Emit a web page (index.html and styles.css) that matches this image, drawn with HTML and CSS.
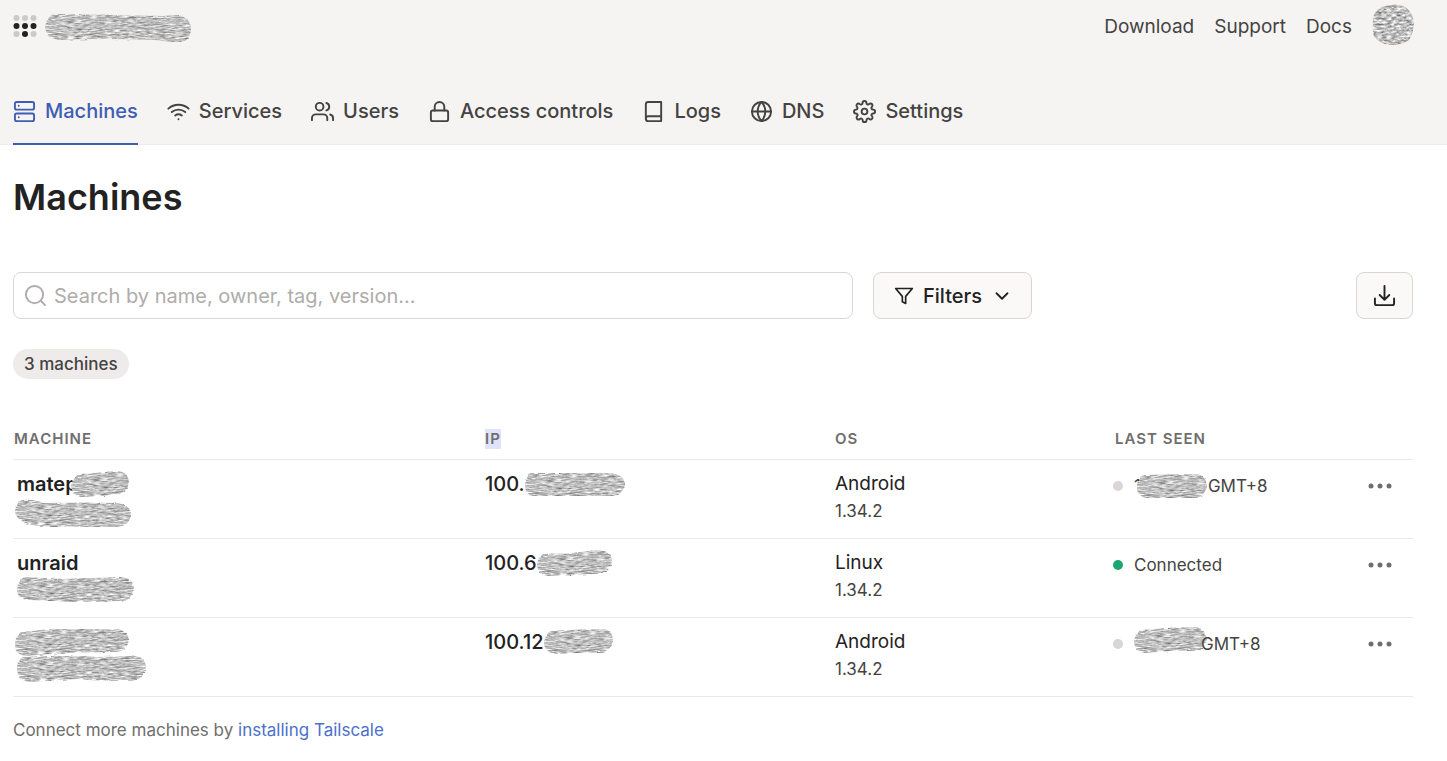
FILE: index.html
```
<!DOCTYPE html>
<html lang="en">
<head>
<meta charset="utf-8">
<meta name="viewport" content="width=device-width, initial-scale=1">
<title>Machines</title>
<link rel="stylesheet" href="styles.css">
</head>
<body>
<svg class="defs" width="0" height="0" aria-hidden="true">
  <filter id="smear" x="0" y="0" width="100%" height="100%" color-interpolation-filters="sRGB">
    <feTurbulence type="fractalNoise" baseFrequency="0.13 0.75" numOctaves="3" seed="4" result="noise"/>
    <feColorMatrix in="noise" type="matrix" values="0.6 0.5 0 0 0.2  0.6 0.5 0 0 0.2  0.6 0.5 0 0 0.2  0 0 0 0 1" result="grey"/>
    <feDisplacementMap in="SourceGraphic" in2="noise" scale="3" xChannelSelector="R" yChannelSelector="G" result="edge"/>
    <feComposite in="grey" in2="edge" operator="in"/>
  </filter>
  <filter id="swirl" x="0" y="0" width="100%" height="100%" color-interpolation-filters="sRGB">
    <feTurbulence type="fractalNoise" baseFrequency="0.2 0.5" numOctaves="3" seed="9" result="noise"/>
    <feColorMatrix in="noise" type="matrix" values="0.7 0.6 0 0 0.1  0.7 0.6 0 0 0.1  0.7 0.6 0 0 0.1  0 0 0 0 1" result="grey"/>
    <feComposite in="grey" in2="SourceGraphic" operator="in"/>
  </filter>
</svg>

<header class="header">
  <div class="topbar">
    <div class="brand">
      <svg class="logo" viewBox="0 0 24 24" aria-hidden="true">
        <g fill="#cccac9"><circle cx="3.5" cy="4" r="3"/><circle cx="12" cy="4" r="3"/><circle cx="20.5" cy="4" r="3"/><circle cx="3.5" cy="20" r="3"/><circle cx="20.5" cy="20" r="3"/></g>
        <g fill="#232222"><circle cx="3.5" cy="12" r="3"/><circle cx="12" cy="12" r="3"/><circle cx="20.5" cy="12" r="3"/><circle cx="12" cy="20" r="3"/></g>
      </svg>
      <svg class="smear low" width="148" height="32" viewBox="0 0 148 32" aria-hidden="true"><path filter="url(#smear)" d="M11 2Q60 3 120 4Q132 2 138 4Q147 8 147 17Q146 30 135 30Q122 30 110 28Q60 26 14 28Q2 26 1 15Q2 4 11 2Z"/></svg>
    </div>
    <div class="links">
      <a href="#">Download</a>
      <a href="#">Support</a>
      <a href="#">Docs</a>
      <button class="avatar" type="button" aria-label="Account">
        <svg width="42" height="42" viewBox="0 0 42 42" aria-hidden="true"><path filter="url(#swirl)" d="M10 3Q21-1 32 2Q41 8 42 20Q41 31 36 37Q29 41 17 41Q8 40 2 32Q0 27 1 19Q0 7 10 3Z"/></svg>
      </button>
    </div>
  </div>
  <nav class="nav">
    <a class="tab active" href="#"><svg class="icon" viewBox="0 0 24 24"><rect x="2" y="2" width="20" height="8" rx="2"/><rect x="2" y="14" width="20" height="8" rx="2"/><path d="M6 6h.01M6 18h.01"/></svg>Machines</a>
    <a class="tab" href="#"><svg class="icon" viewBox="0 0 24 24"><path d="M5 12.55a11 11 0 0 1 14.08 0M1.42 9a16 16 0 0 1 21.16 0M8.53 16.11a6 6 0 0 1 6.95 0M12 20h.01"/></svg>Services</a>
    <a class="tab" href="#"><svg class="icon" viewBox="0 0 24 24"><path d="M17 21v-2a4 4 0 0 0-4-4H5a4 4 0 0 0-4 4v2M23 21v-2a4 4 0 0 0-3-3.87M16 3.13a4 4 0 0 1 0 7.75"/><circle cx="9" cy="7" r="4"/></svg>Users</a>
    <a class="tab" href="#"><svg class="icon" viewBox="0 0 24 24"><rect x="3" y="11" width="18" height="11" rx="2"/><path d="M7 11V7a5 5 0 0 1 10 0v4"/></svg>Access controls</a>
    <a class="tab" href="#"><svg class="icon" viewBox="0 0 24 24"><path d="M4 19.500A2.500 2.500 0 0 1 6.500 17H20M6.500 2H20v20H6.500A2.500 2.500 0 0 1 4 19.500v-15A2.500 2.500 0 0 1 6.500 2z"/></svg>Logs</a>
    <a class="tab" href="#"><svg class="icon" viewBox="0 0 24 24"><circle cx="12" cy="12" r="10"/><path d="M2 12h20M12 2a15.300 15.300 0 0 1 4 10 15.300 15.300 0 0 1-4 10 15.300 15.300 0 0 1-4-10 15.300 15.300 0 0 1 4-10z"/></svg>DNS</a>
    <a class="tab" href="#"><svg class="icon" viewBox="0 0 24 24"><circle cx="12" cy="12" r="3"/><path d="M19.400 15a1.650 1.650 0 0 0 .33 1.820l.06.06a2 2 0 0 1 0 2.830 2 2 0 0 1-2.830 0l-.06-.06a1.650 1.650 0 0 0-1.820-.33 1.650 1.650 0 0 0-1 1.510V21a2 2 0 0 1-2 2 2 2 0 0 1-2-2v-.09A1.650 1.650 0 0 0 9 19.400a1.650 1.650 0 0 0-1.820.33l-.06.06a2 2 0 0 1-2.830 0 2 2 0 0 1 0-2.830l.06-.06a1.650 1.650 0 0 0 .33-1.820 1.650 1.650 0 0 0-1.510-1H3a2 2 0 0 1-2-2 2 2 0 0 1 2-2h.09A1.650 1.650 0 0 0 4.600 9a1.650 1.650 0 0 0-.33-1.820l-.06-.06a2 2 0 0 1 0-2.830 2 2 0 0 1 2.830 0l.06.06a1.650 1.650 0 0 0 1.820.33H9a1.650 1.650 0 0 0 1-1.510V3a2 2 0 0 1 2-2 2 2 0 0 1 2 2v.09a1.650 1.650 0 0 0 1 1.510 1.650 1.650 0 0 0 1.820-.33l.06-.06a2 2 0 0 1 2.830 0 2 2 0 0 1 0 2.830l-.06.06a1.650 1.650 0 0 0-.33 1.820V9a1.650 1.650 0 0 0 1.510 1H21a2 2 0 0 1 2 2 2 2 0 0 1-2 2h-.09a1.650 1.650 0 0 0-1.510 1z"/></svg>Settings</a>
  </nav>
</header>

<main class="main">
  <h1 class="title">Machines</h1>

  <div class="toolbar">
    <label class="search">
      <svg class="search-icon" viewBox="0 0 24 24" aria-hidden="true"><circle cx="11" cy="11" r="9"/><path d="M22 22l-4.500-4.500"/></svg>
      <input type="text" placeholder="Search by name, owner, tag, version..." aria-label="Search machines">
    </label>
    <button class="button filters" type="button">
      <svg class="funnel" viewBox="0 0 24 24" aria-hidden="true"><path d="M22 3H2l8 9.460V19l4 2v-8.540L22 3z"/></svg>
      <span>Filters</span>
      <svg class="chevron" viewBox="0 0 24 24" aria-hidden="true"><path d="M6 9l6 6 6-6"/></svg>
    </button>
    <button class="button download" type="button" aria-label="Download list">
      <svg class="tray" viewBox="0 0 24 24" aria-hidden="true"><path d="M12 2v14M7 11.500l5 5 5-5M2 15v5a2 2 0 0 0 2 2h16a2 2 0 0 0 2-2v-5"/></svg>
    </button>
  </div>

  <div class="count">3 machines</div>

  <table class="table">
    <colgroup><col><col class="col-ip"><col class="col-os"><col class="col-seen"><col class="col-menu"></colgroup>
    <thead>
      <tr><th>Machine</th><th><mark>IP</mark></th><th>OS</th><th>Last seen</th><th></th></tr>
    </thead>
    <tbody>
      <tr>
        <td>
          <div class="line name">matep<svg class="smear over" width="60" height="28" viewBox="0 0 60 28" aria-hidden="true"><path filter="url(#smear)" d="M10 4Q28 3 46 1Q58 1 59 12Q58 22 48 24Q28 27 10 27Q2 24 1 16Q3 6 10 4Z"/></svg></div>
          <div class="line"><svg class="smear low" width="118" height="30" viewBox="0 0 118 30" aria-hidden="true"><path filter="url(#smear)" d="M8 2Q18 1 30 5Q65 4 104 5Q117 7 117 17Q115 28 104 29Q60 29 26 28Q2 26 1 13Q2 4 8 2Z"/></svg></div>
        </td>
        <td><div class="line ip">100.<svg class="smear" width="102" height="26" viewBox="0 0 102 26" aria-hidden="true"><path filter="url(#smear)" d="M6 2H88Q101 5 101 14Q98 25 88 25H8Q1 23 1 14Q2 5 6 2Z"/></svg></div></td>
        <td><div class="line os">Android</div><div class="line version">1.34.2</div></td>
        <td><div class="line seen"><span class="dot"></span>1<svg class="smear over" width="72" height="26" viewBox="0 0 72 26" aria-hidden="true"><path filter="url(#smear)" d="M8 2Q35 1 62 1Q71 4 71 14Q68 24 60 25H10Q1 23 1 14Q2 4 8 2Z"/></svg>GMT+8</div></td>
        <td><button class="menu" type="button" aria-label="Machine menu"><svg viewBox="0 0 24 6"><circle cx="3" cy="3" r="2.500"/><circle cx="12" cy="3" r="2.500"/><circle cx="21" cy="3" r="2.500"/></svg></button></td>
      </tr>
      <tr>
        <td>
          <div class="line name">unraid</div>
          <div class="line"><svg class="smear inset" width="119" height="27" viewBox="0 0 119 27" aria-hidden="true"><path filter="url(#smear)" d="M8 1Q30 2 46 3L104 1Q117 2 118 12Q115 25 106 25Q70 26 52 26Q30 24 12 24Q1 23 1 14Q2 4 8 1Z"/></svg></div>
        </td>
        <td><div class="line ip">100.6<svg class="smear" width="77" height="28" viewBox="0 0 77 28" aria-hidden="true"><path filter="url(#smear)" d="M8 5Q35 5 60 1Q76 2 76 12Q75 23 64 24Q38 27 12 27Q1 25 1 16Q1 8 8 5Z"/></svg></div></td>
        <td><div class="line os">Linux</div><div class="line version">1.34.2</div></td>
        <td><div class="line seen"><span class="dot online"></span>Connected</div></td>
        <td><button class="menu" type="button" aria-label="Machine menu"><svg viewBox="0 0 24 6"><circle cx="3" cy="3" r="2.500"/><circle cx="12" cy="3" r="2.500"/><circle cx="21" cy="3" r="2.500"/></svg></button></td>
      </tr>
      <tr>
        <td>
          <div class="line"><svg class="smear" width="116" height="30" viewBox="0 0 116 30" aria-hidden="true"><path filter="url(#smear)" d="M8 5Q30 2 50 2L104 2Q114 4 115 13Q113 24 102 25Q60 25 38 27L10 29Q1 26 1 17Q2 7 8 5Z"/></svg></div>
          <div class="line"><svg class="smear inset" width="131" height="29" viewBox="0 0 131 29" aria-hidden="true"><path filter="url(#smear)" d="M7 3Q60 1 80 3L114 2Q129 1 130 13Q128 25 116 27Q80 27 60 25L12 28Q1 25 1 15Q1 6 7 3Z"/></svg></div>
        </td>
        <td><div class="line ip">100.12<svg class="smear" width="71" height="27" viewBox="0 0 71 27" aria-hidden="true"><path filter="url(#smear)" d="M8 3Q35 1 62 1Q70 4 70 13Q67 23 60 24L12 26Q1 24 1 15Q2 5 8 3Z"/></svg></div></td>
        <td><div class="line os">Android</div><div class="line version">1.34.2</div></td>
        <td><div class="line seen"><span class="dot"></span><svg class="smear high" width="75" height="28" viewBox="0 0 75 28" aria-hidden="true"><path filter="url(#smear)" d="M8 4Q40 1 64 1Q73 6 74 14L68 24Q40 24 12 27Q1 25 1 16Q2 7 8 4Z"/></svg><span class="under">GMT+8</span></div></td>
        <td><button class="menu" type="button" aria-label="Machine menu"><svg viewBox="0 0 24 6"><circle cx="3" cy="3" r="2.500"/><circle cx="12" cy="3" r="2.500"/><circle cx="21" cy="3" r="2.500"/></svg></button></td>
      </tr>
    </tbody>
  </table>

  <p class="footnote">Connect more machines by <a href="#">installing Tailscale</a></p>
</main>
</body>
</html>
```
FILE: styles.css
```
* {
  box-sizing: border-box;
}

body {
  margin: 0;
  background: #fff;
  color: #232222;
  font-family: Inter, "Liberation Sans", sans-serif;
  font-size: 20px;
  line-height: 30px;
}

a {
  color: inherit;
  text-decoration: none;
}

button {
  font: inherit;
  color: inherit;
  cursor: pointer;
}

svg {
  display: block;
  flex: none;
}

.defs {
  position: absolute;
}

.header {
  padding: 3px 33px 0 13px;
  background: #f6f4f3;
  border-bottom: 1px solid #eeebea;
  color: #444342;
}

.topbar {
  display: flex;
  justify-content: space-between;
}

.brand {
  display: flex;
  align-items: center;
  gap: 7px;
  height: 46px;
}

.logo {
  width: 24px;
  height: 24px;
}

.links {
  display: flex;
  align-items: center;
  gap: 20px;
  height: 44px;
  font-size: 19px;
}

.links a {
  padding-top: 3px;
}

.avatar {
  padding: 0;
  border: 0;
  background: none;
}

.nav {
  display: flex;
  gap: 29px;
  margin-top: 30px;
  margin-bottom: -1px;
  font-weight: 500;
}

.tab {
  display: flex;
  align-items: center;
  gap: 9px;
  height: 66px;
  border-bottom: 2px solid transparent;
  white-space: nowrap;
}

.tab.active {
  color: #3f5db3;
  border-color: #3f5db3;
}

.icon {
  width: 23px;
  height: 23px;
}

.icon,
.search-icon,
.funnel,
.chevron,
.tray {
  fill: none;
  stroke: currentColor;
  stroke-width: 2;
  stroke-linecap: round;
  stroke-linejoin: round;
}

.main {
  padding: 27px 34px 18px 13px;
}

.title {
  margin: 0;
  font-size: 36px;
  font-weight: 600;
  line-height: 50px;
}

.toolbar {
  display: flex;
  gap: 20px;
  margin-top: 50px;
}

.search {
  display: flex;
  align-items: center;
  gap: 7px;
  width: 60%;
  height: 47px;
  padding: 0 10px;
  border: 1px solid #d9d6d5;
  border-radius: 8px;
}

.search-icon {
  width: 23px;
  height: 23px;
  color: #afacab;
}

.search input {
  flex: 1;
  min-width: 0;
  padding: 0;
  border: 0;
  outline: 0;
  background: none;
  color: inherit;
  font: inherit;
}

.search input::placeholder {
  color: #afacab;
  opacity: 1;
}

.button {
  display: flex;
  align-items: center;
  justify-content: center;
  height: 47px;
  padding: 0 18px 0 20px;
  border: 1px solid #d9d6d5;
  border-radius: 8px;
  background: #faf9f8;
  font-weight: 500;
}

.filters {
  gap: 9px;
}

.funnel {
  width: 20px;
  height: 20px;
}

.chevron {
  width: 22px;
  height: 22px;
}

.download {
  width: 57px;
  padding: 0;
  margin-left: auto;
}

.tray {
  width: 23px;
  height: 23px;
}

.count {
  width: max-content;
  margin-top: 30px;
  padding: 0 11px;
  border-radius: 15px;
  background: #eeebea;
  color: #444342;
  font-size: 17px;
  font-weight: 500;
}

.table {
  width: 100%;
  margin-top: 45px;
  border-collapse: separate;
  border-spacing: 0;
  table-layout: fixed;
}

.col-ip {
  width: 25%;
}

.col-os {
  width: 20%;
}

.col-seen {
  width: 16%;
}

.col-menu {
  width: 74px;
}

.table th,
.table td {
  padding: 0;
  border-bottom: 1px solid #ebe9e8;
  text-align: left;
  vertical-align: top;
}

.table th {
  height: 36px;
  padding-top: 5px;
  color: #706e6d;
  font-size: 15px;
  font-weight: 600;
  letter-spacing: 1px;
  line-height: 20px;
  text-transform: uppercase;
}

.table th:first-child {
  padding-left: 1px;
}

.table td {
  padding: 10px 0 14px;
}

mark {
  display: inline-block;
  background: #dfe4fb;
  color: inherit;
}

.line {
  display: flex;
  align-items: center;
  height: 27px;
}

.line .smear {
  margin-left: 1px;
}

.line .inset {
  margin-left: 3px;
}

.line .over {
  position: relative;
  margin-left: -5px;
}

.line.name .over {
  margin-left: -8px;
}

.line .high {
  margin-left: -1px;
  margin-bottom: 8px;
}

.low {
  margin-top: 4px;
}

.name {
  padding-left: 4px;
  font-weight: 600;
}

.ip {
  font-weight: 500;
}

.ip .smear {
  margin-left: -1px;
}

.os {
  padding-top: 1px;
  font-size: 19px;
}

.version {
  color: #444342;
  font-size: 17px;
}

.seen {
  padding-top: 4px;
  color: #444342;
  font-size: 17px;
}

.under {
  margin-left: -7px;
}

.dot {
  width: 10px;
  height: 10px;
  margin: 0 11px 0 -2px;
  border-radius: 50%;
  background: #d9d6d5;
}

.dot.online {
  background: #1ea672;
}

.menu {
  display: block;
  margin: 3px 0 0 28px;
  padding: 10px 1px;
  border: 0;
  background: none;
}

.menu svg {
  width: 24px;
  height: 6px;
  fill: #706e6d;
}

.footnote {
  margin: 20px 0 0;
  color: #706e6d;
  font-size: 17px;
  line-height: 27px;
}

.footnote a {
  color: #4b70cc;
}
```
